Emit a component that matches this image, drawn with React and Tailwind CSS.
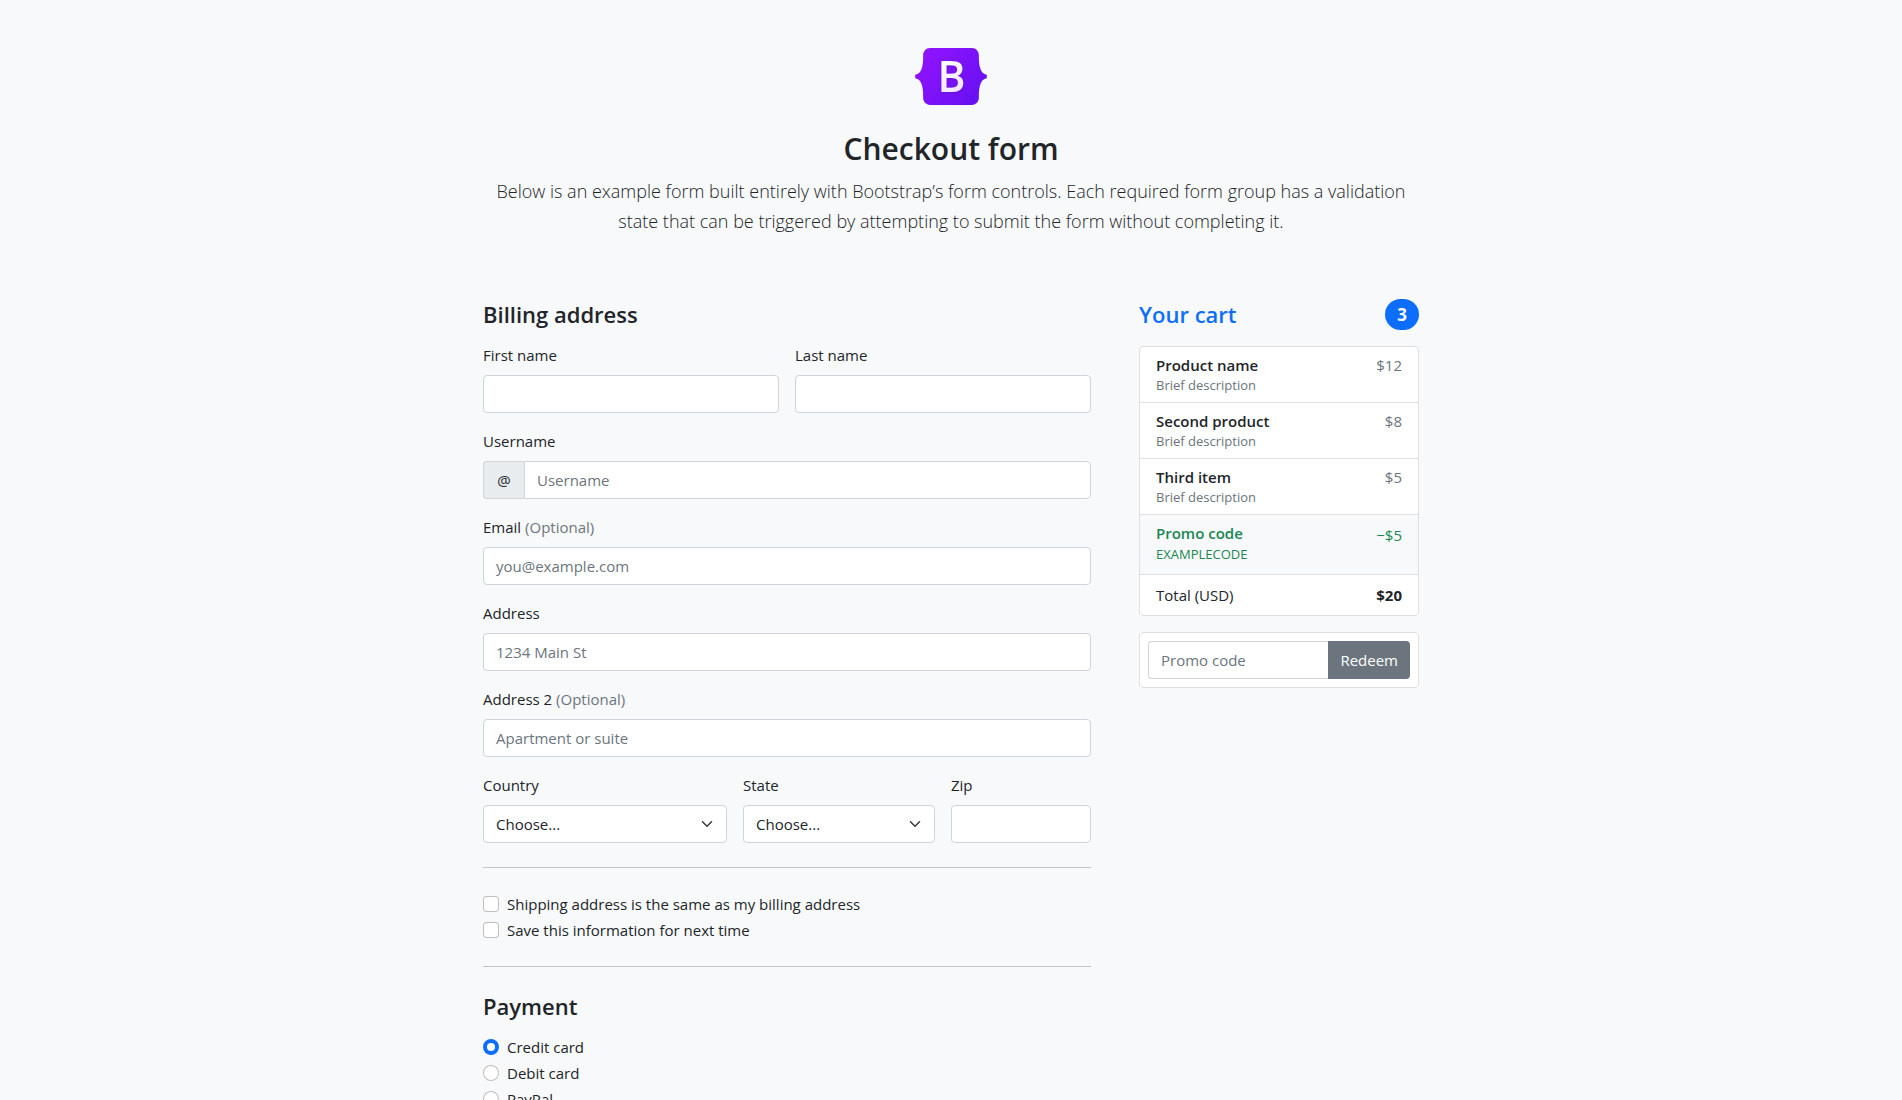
import React from "react";

const control =
  "block h-[38px] w-full rounded-[4px] border border-[#ced4da] bg-white px-3 text-[15px] leading-6 text-[#212529] placeholder:text-[#6c757d] placeholder:opacity-100 outline-none focus:border-[#86b7fe] focus:ring-4 focus:ring-[#0d6efd]/25";

function Logo() {
  return (
    <svg className="mx-auto mb-6 block h-[57px] w-[72px]" viewBox="0 0 118 94" role="img" aria-label="Bootstrap">
      <defs>
        <linearGradient id="logo-frame" x1="14" y1="4" x2="108" y2="90" gradientUnits="userSpaceOnUse">
          <stop stopColor="#9013fe" />
          <stop offset="1" stopColor="#6610f2" />
        </linearGradient>
        <linearGradient id="logo-letter" x1="42" y1="22" x2="70" y2="70" gradientUnits="userSpaceOnUse">
          <stop stopColor="#ffffff" />
          <stop offset="1" stopColor="#f1e5fc" />
        </linearGradient>
        <filter id="logo-shadow" x="-20%" y="-20%" width="140%" height="140%">
          <feDropShadow dx="0" dy="1" stdDeviation="2" floodColor="#000000" floodOpacity="0.2" />
        </filter>
      </defs>
      <path
        fill="url(#logo-frame)"
        d="M24.509 0c-6.733 0-11.715 5.893-11.492 12.284.214 6.14-.064 14.092-2.066 20.577C8.943 39.365 5.547 43.485 0 44.014v5.972c5.547.529 8.943 4.649 10.951 11.153 2.002 6.485 2.28 14.437 2.066 20.577C12.794 88.106 17.776 94 24.51 94H93.5c6.733 0 11.714-5.893 11.491-12.284-.214-6.14.064-14.092 2.066-20.577 2.009-6.504 5.396-10.624 10.943-11.153v-5.972c-5.547-.529-8.934-4.649-10.943-11.153-2.002-6.484-2.28-14.437-2.066-20.577C105.214 5.894 100.233 0 93.5 0H24.508z"
      />
      <text
        x="60"
        y="72"
        textAnchor="middle"
        fontSize="70"
        fontWeight="600"
        fill="url(#logo-letter)"
        filter="url(#logo-shadow)"
      >
        B
      </text>
    </svg>
  );
}

function Field({ id, label, optional, className, children }) {
  return (
    <div className={className}>
      <label htmlFor={id} className="mb-2 block">
        {label} {optional && <span className="text-[#6c757d]">(Optional)</span>}
      </label>
      {children}
    </div>
  );
}

function Select({ id }) {
  return (
    <div className="relative">
      <select id={id} className={control + " appearance-none pr-9"} defaultValue="">
        <option value="">Choose...</option>
      </select>
      <svg
        className="pointer-events-none absolute top-[13px] right-3 h-3 w-4"
        viewBox="0 0 16 16"
        fill="none"
        stroke="#343a40"
        strokeWidth="2"
        strokeLinecap="round"
        strokeLinejoin="round"
        aria-hidden="true"
      >
        <path d="M2 5l6 6 6-6" />
      </svg>
    </div>
  );
}

function Check({ id, label }) {
  return (
    <div className="flex gap-2">
      <input
        id={id}
        type="checkbox"
        className="mt-1 size-4 shrink-0 appearance-none rounded-[4px] border border-black/25 bg-white checked:border-[#0d6efd] checked:bg-[#0d6efd]"
      />
      <label htmlFor={id}>{label}</label>
    </div>
  );
}

function Radio({ id, label, defaultChecked }) {
  return (
    <div className="flex gap-2">
      <input
        id={id}
        type="radio"
        name="payment"
        defaultChecked={defaultChecked}
        className="mt-1 size-4 shrink-0 appearance-none rounded-full border border-black/25 bg-white checked:border-4 checked:border-[#0d6efd]"
      />
      <label htmlFor={id}>{label}</label>
    </div>
  );
}

const products = [
  { name: "Product name", price: "$12" },
  { name: "Second product", price: "$8" },
  { name: "Third item", price: "$5" },
];

function Cart() {
  return (
    <aside className="col-span-4">
      <h2 className="mb-4 flex items-center justify-between text-[22px] leading-[29px] font-semibold text-[#0d6efd]">
        <span>Your cart</span>
        <span className="rounded-full bg-[#0d6efd] px-3 py-[6px] text-[17px] leading-[19px] font-bold text-white">3</span>
      </h2>
      <ul className="mb-4 divide-y divide-[#dfdfdf] overflow-hidden rounded-[4px] border border-[#dfdfdf] bg-white">
        {products.map((item) => (
          <li key={item.name} className="flex justify-between px-4 pt-2 pb-[7px]">
            <div>
              <h3 className="leading-[20px] font-semibold">{item.name}</h3>
              <p className="text-[13px] leading-[20px] text-[#6c757d]">Brief description</p>
            </div>
            <span className="leading-[20px] text-[#6c757d]">{item.price}</span>
          </li>
        ))}
        <li className="flex justify-between bg-[#f8f9fa] px-4 pt-2 pb-[9px] text-[#198754]">
          <div>
            <h3 className="leading-[20px] font-semibold">Promo code</h3>
            <p className="text-[13px] leading-[22px]">EXAMPLECODE</p>
          </div>
          <span className="leading-6">−$5</span>
        </li>
        <li className="flex justify-between px-4 py-2">
          <span>Total (USD)</span>
          <strong className="font-bold">$20</strong>
        </li>
      </ul>
      <form className="flex rounded-[4px] border border-[#dfdfdf] bg-white p-2" onSubmit={(e) => e.preventDefault()}>
        <input
          type="text"
          aria-label="Promo code"
          placeholder="Promo code"
          className={control + " min-w-0 flex-1 rounded-r-none border-r-0"}
        />
        <button type="submit" className="h-[38px] rounded-r-[4px] bg-[#6c757d] px-3 text-white">
          Redeem
        </button>
      </form>
    </aside>
  );
}

export default function App() {
  return (
    <div className="min-h-screen bg-[#f8f9fa] font-['Open_Sans','Noto_Sans',sans-serif] text-[15px] leading-6 text-[#212529]">
      <div className="mx-auto max-w-[960px] px-3">
        <header className="pt-12 pb-[63px] text-center">
          <Logo />
          <h1 className="mb-[7px] text-[30px] leading-10 font-semibold">Checkout form</h1>
          <p className="text-[18px] leading-[30px] font-light">
            Below is an example form built entirely with Bootstrap’s form controls. Each required form group has a
            validation state that can be triggered by attempting to submit the form without completing it.
          </p>
        </header>

        <main className="grid grid-cols-12 items-start gap-12">
          <form className="col-span-8" onSubmit={(e) => e.preventDefault()}>
            <h2 className="mb-[14px] text-[22px] leading-[30px] font-semibold">Billing address</h2>
            <div className="grid grid-cols-12 gap-4">
              <Field id="first-name" label="First name" className="col-span-6">
                <input id="first-name" type="text" className={control} />
              </Field>
              <Field id="last-name" label="Last name" className="col-span-6">
                <input id="last-name" type="text" className={control} />
              </Field>
              <Field id="username" label="Username" className="col-span-12">
                <div className="flex">
                  <span className="flex w-[41px] shrink-0 items-center justify-center rounded-l-[4px] border border-r-0 border-[#ced4da] bg-[#e9ecef]">
                    @
                  </span>
                  <input
                    id="username"
                    type="text"
                    placeholder="Username"
                    className={control + " min-w-0 flex-1 rounded-l-none"}
                  />
                </div>
              </Field>
              <Field id="email" label="Email" optional className="col-span-12">
                <input id="email" type="email" placeholder="you@example.com" className={control} />
              </Field>
              <Field id="address" label="Address" className="col-span-12">
                <input id="address" type="text" placeholder="1234 Main St" className={control} />
              </Field>
              <Field id="address2" label="Address 2" optional className="col-span-12">
                <input id="address2" type="text" placeholder="Apartment or suite" className={control} />
              </Field>
              <Field id="country" label="Country" className="col-span-5">
                <Select id="country" />
              </Field>
              <Field id="state" label="State" className="col-span-4">
                <Select id="state" />
              </Field>
              <Field id="zip" label="Zip" className="col-span-3">
                <input id="zip" type="text" className={control} />
              </Field>
            </div>

            <hr className="my-6 border-[#c2c4c7]" />

            <div className="space-y-[2px]">
              <Check id="same-address" label="Shipping address is the same as my billing address" />
              <Check id="save-info" label="Save this information for next time" />
            </div>

            <hr className="my-6 border-[#c2c4c7]" />

            <h2 className="mb-[14px] text-[22px] leading-[30px] font-semibold">Payment</h2>
            <div className="space-y-[2px]">
              <Radio id="credit" label="Credit card" defaultChecked />
              <Radio id="debit" label="Debit card" />
              <Radio id="paypal" label="PayPal" />
            </div>
          </form>
          <Cart />
        </main>
      </div>
    </div>
  );
}
